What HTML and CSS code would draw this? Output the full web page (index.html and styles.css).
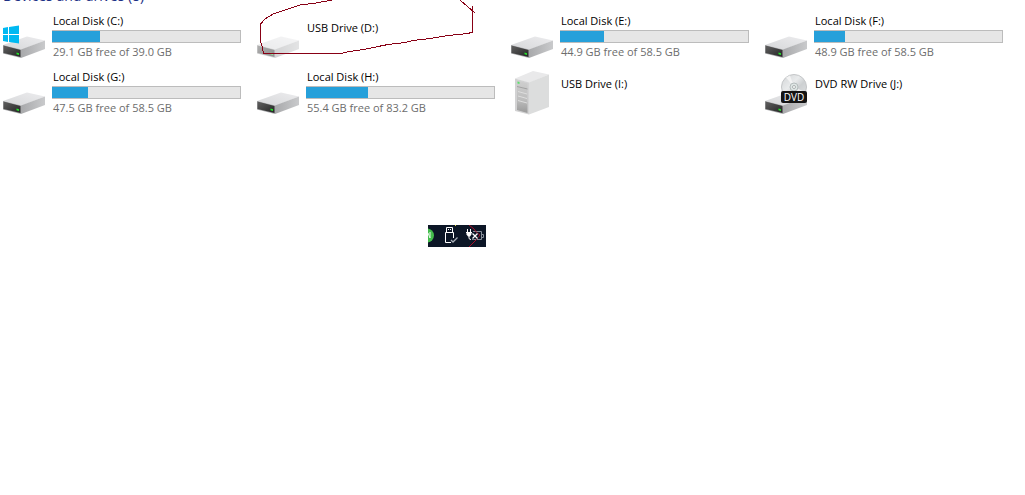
FILE: index.html
```
<!DOCTYPE html>
<html lang="en">
<head>
<meta charset="utf-8">
<title>Devices and drives</title>
<link rel="stylesheet" href="styles.css">
</head>
<body>
<svg class="defs" aria-hidden="true">
  <defs>
    <linearGradient id="top" x1="0" y1="1" x2="1" y2="0"><stop offset="0" stop-color="#d6d7d9"/><stop offset="1" stop-color="#ececee"/></linearGradient>
    <linearGradient id="side" x1="0" y1="0" x2="1" y2="0"><stop offset="0" stop-color="#a8a9ab"/><stop offset="1" stop-color="#c9cacc"/></linearGradient>
    <linearGradient id="front" x1="0" y1="0" x2="1" y2="1"><stop offset="0" stop-color="#606060"/><stop offset="1" stop-color="#242424"/></linearGradient>
    <linearGradient id="tower" x1="0" y1="0" x2="0" y2="1"><stop offset="0" stop-color="#cfcfcf"/><stop offset=".6" stop-color="#bdbdbd"/><stop offset="1" stop-color="#9a9a9a"/></linearGradient>
    <linearGradient id="disc" x1="0" y1="0" x2="1" y2="1"><stop offset="0" stop-color="#d2d4d6"/><stop offset=".4" stop-color="#e9ebec"/><stop offset=".6" stop-color="#cdd0d2"/><stop offset="1" stop-color="#e2e4e5"/></linearGradient>
    <symbol id="hdd" viewBox="0 0 48 48">
      <path fill="url(#top)" d="M3 33 27 24.5 45 28.5 21 38Z"/>
      <path fill="url(#side)" d="M21 37.500 45 28.500V37L21 46Z"/>
      <path fill="#a9aaac" d="M3 33 21 37.500V46L3 41.500Z"/>
      <path fill="url(#front)" d="M3.500 33.500 20.500 38V45L3.500 41Z"/>
      <path fill="#25e52b" d="M16.500 40.500 19 41.200V43L16.500 42.300Z"/>
    </symbol>
  </defs>
</svg>
<main class="drives">
  <h1 class="heading">Devices and drives (8)</h1>
  <ul class="grid">
    <li class="tile">
      <svg class="icon" aria-hidden="true"><use href="#hdd"/><path fill="#00b9f2" d="M3 16 8 15V22H3ZM9 15 19 13.500V22H9ZM3 23H8V30L3 29ZM9 23H19V31.500L9 30Z"/></svg>
      <div class="info"><span class="name">Local Disk (C:)</span><div class="bar"><div class="fill" style="width:25.500%"></div></div><span class="free">29.1 GB free of 39.0 GB</span></div>
    </li>
    <li class="tile">
      <svg class="icon faded" aria-hidden="true"><use href="#hdd"/></svg>
      <div class="info bare"><span class="name">USB Drive (D:)</span></div>
    </li>
    <li class="tile">
      <svg class="icon" aria-hidden="true"><use href="#hdd"/></svg>
      <div class="info"><span class="name">Local Disk (E:)</span><div class="bar"><div class="fill" style="width:23.300%"></div></div><span class="free">44.9 GB free of 58.5 GB</span></div>
    </li>
    <li class="tile">
      <svg class="icon" aria-hidden="true"><use href="#hdd"/></svg>
      <div class="info"><span class="name">Local Disk (F:)</span><div class="bar"><div class="fill" style="width:16.400%"></div></div><span class="free">48.9 GB free of 58.5 GB</span></div>
    </li>
    <li class="tile">
      <svg class="icon" aria-hidden="true"><use href="#hdd"/></svg>
      <div class="info"><span class="name">Local Disk (G:)</span><div class="bar"><div class="fill" style="width:19%"></div></div><span class="free">47.5 GB free of 58.5 GB</span></div>
    </li>
    <li class="tile">
      <svg class="icon" aria-hidden="true"><use href="#hdd"/></svg>
      <div class="info"><span class="name">Local Disk (H:)</span><div class="bar"><div class="fill" style="width:33%"></div></div><span class="free">55.4 GB free of 83.2 GB</span></div>
    </li>
    <li class="tile">
      <svg class="icon" viewBox="0 0 48 48" aria-hidden="true">
        <path fill="#e9e9ea" d="M7 10.500 25 3 41 6.500 21 15Z"/>
        <path fill="#dcdddd" d="M21 14.500 41 6.500V39L21 46.500Z"/>
        <path fill="#d2d2d3" d="M7 10.500 21 14.500V46.500L7 43Z"/>
        <path fill="url(#tower)" d="M9 12.500 19.500 15.500V45L9 42Z"/>
        <path fill="none" stroke="#a2a2a2" d="M9 18.500 19.500 21"/>
        <path fill="none" stroke="#dedede" d="M10 23.500 19 26M10 28 19 30.500M10 32.500 19 35"/>
        <path fill="#5ae36b" d="M9.500 13.500 11.500 14V16L9.500 15.500Z"/>
      </svg>
      <div class="info bare"><span class="name">USB Drive (I:)</span></div>
    </li>
    <li class="tile">
      <svg class="icon" aria-hidden="true">
        <use href="#hdd"/>
        <circle cx="32" cy="19" r="12.500" fill="url(#disc)" stroke="#c4c6c8"/>
        <path fill="#f7f8f8" opacity=".8" d="M32 19 24 9.500 28 7.500ZM32 19 43 24 40 28Z"/>
        <circle cx="32" cy="19" r="4" fill="#dfe6e5" stroke="#b5bdbd"/>
        <circle cx="32" cy="19" r="1.500" fill="#fff" stroke="#aab1b1"/>
        <rect x="19" y="23" width="26" height="12" rx="2" fill="#141414"/>
        <text class="dvd" x="32" y="33" text-anchor="middle">DVD</text>
      </svg>
      <div class="info bare"><span class="name">DVD RW Drive (J:)</span></div>
    </li>
  </ul>
  <svg class="scribble" viewBox="0 0 230 60" aria-hidden="true">
    <path d="M82 0 66 3 50 5 38 9 29 12 23 14 15 19 10.500 24V42L12 46 13.500 53.500H91L99 51.500 114 49.500 128 46.500 138 44.500 155 42.500 163 40.500 180 38.500 198 35.500 218 33.500 222.500 32V6M210 0 218 7 225 13"/>
  </svg>
</main>
<svg class="tray" viewBox="0 0 58 22" role="img" aria-label="System tray">
  <rect width="58" height="22" fill="#0c1626"/>
  <circle cx="-1" cy="10.500" r="7" fill="#43bd4c"/>
  <path d="M0 8 2 13V7" fill="none" stroke="#e9f8ea"/>
  <path fill="#e8dc3c" d="M27 0H28V1H27Z"/>
  <g fill="none" stroke="#fff">
    <path d="M18.500 7.500V2.500H24.500V7.500M20 4.500H21M22 4.500H23M23 17.500H17.500V7.500H25.500V13"/>
    <path stroke="#a9afb8" stroke-width="1.300" d="M23 15 25 17 29.500 12.500"/>
    <path stroke="#858d98" d="M45 6.500H53.500V14.500H44M54 9.500H55.500V12.500H54"/>
    <path stroke="#a50f28" d="M41 0 46 4 49 8 52 10 48 15 41 22"/>
    <path d="M39.500 4V7M42.500 4V7M38 7.500H44M41 10V13Q41 14.500 43 14.500"/>
    <path fill="#fff" stroke="none" d="M38.500 7.500H43.500V9.500L42 11.500H40L38.500 9.500Z"/>
    <path stroke="#0c1626" stroke-width="3" d="M44.500 8.500 49.500 13.500M49.500 8.500 44.500 13.500"/>
    <path stroke-width="1.300" d="M44.500 8.500 49.500 13.500M49.500 8.500 44.500 13.500"/>
  </g>
</svg>
</body>
</html>
```
FILE: styles.css
```
body {
  margin: 0;
  background: #fff;
  color: #000;
  font: 11px/14px "Open Sans", "Noto Sans", sans-serif;
  overflow-x: hidden;
}
.defs {
  position: absolute;
  width: 0;
  height: 0;
}
.drives {
  position: relative;
  overflow: hidden;
}
.heading {
  margin: -14px 0 0;
  padding: 0 3px 6px;
  font-size: 14px;
  line-height: 20px;
  font-weight: 400;
  color: #1e3287;
}
.grid {
  display: grid;
  grid-template-columns: repeat(auto-fill, 254px);
  grid-auto-rows: 56px;
  margin: 0;
  padding: 0;
  list-style: none;
}
.tile {
  display: flex;
  gap: 4px;
}
.icon {
  width: 48px;
  height: 48px;
  flex: none;
}
.faded {
  opacity: 0.5;
}
.info {
  display: flex;
  flex-direction: column;
  width: 189px;
  padding-top: 2px;
}
.bare {
  padding-top: 9px;
}
.name,
.free {
  padding-left: 1px;
}
.free {
  color: #6d6d6d;
}
.bar {
  box-sizing: border-box;
  height: 13px;
  margin: 2px 0;
  border: 1px solid #bcbcbc;
  border-left-width: 0;
  background: #e6e6e6;
}
.fill {
  height: 100%;
  background: #26a0da;
}
.dvd {
  font-size: 10px;
  fill: #fff;
}
.scribble {
  position: absolute;
  left: 250px;
  top: 0;
  width: 230px;
  height: 60px;
  fill: none;
  stroke: #880015;
  shape-rendering: crispEdges;
  pointer-events: none;
}
.tray {
  display: block;
  width: 58px;
  height: 22px;
  margin: 101px 0 0 428px;
}
```
